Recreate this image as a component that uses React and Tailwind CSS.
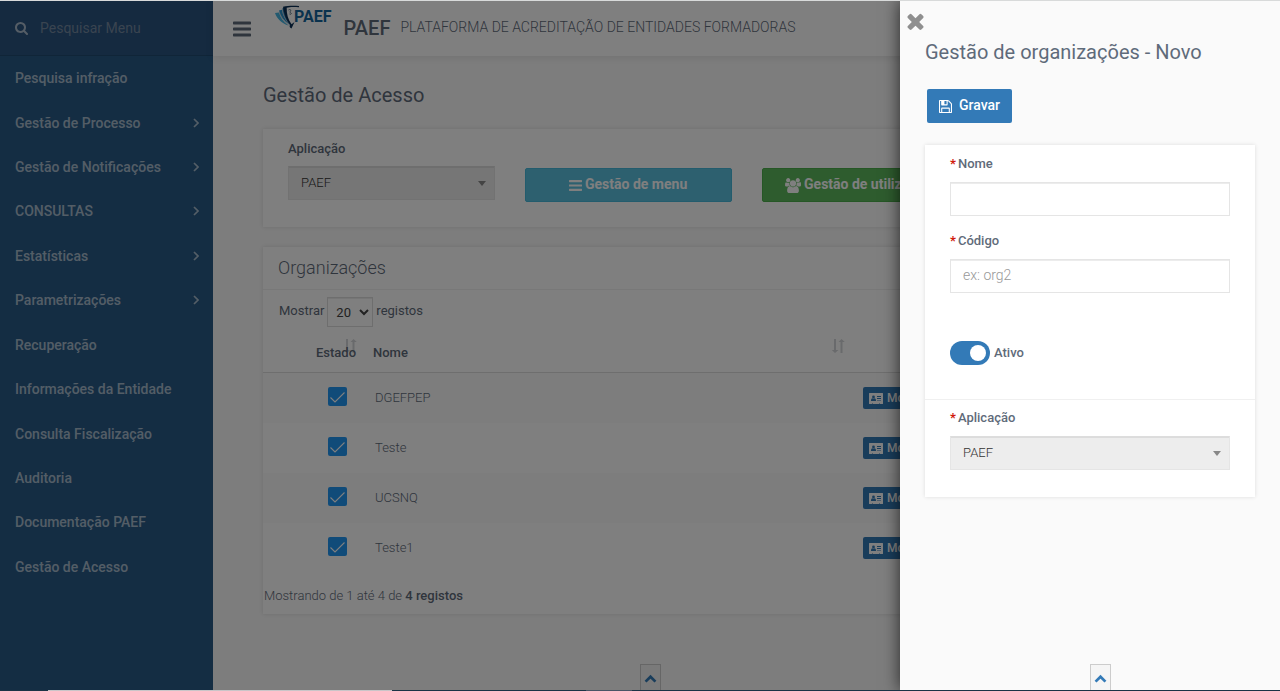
import React from "react";

const PATHS = {
  search: "M1152 832q0-185-131.5-316.5t-316.5-131.5-316.5 131.5-131.5 316.5 131.5 316.5 316.5 131.5 316.5-131.5 131.5-316.5zm512 832q0 52-38 90t-90 38q-54 0-90-38l-343-342q-179 124-399 124-143 0-273.5-55.5t-225-150-150-225-55.5-273.5 55.5-273.5 150-225 225-150 273.5-55.5 273.5 55.5 225 150 150 225 55.5 273.5q0 220-124 399l343 343q37 37 37 90z",
  save: "M512 1536h768v-384h-768v384zm896 0h128v-896q0-14-10-38.5t-20-34.5l-281-281q-10-10-34-20t-39-10v416q0 40-28 68t-68 28h-576q-40 0-68-28t-28-68v-416h-128v1280h128v-416q0-40 28-68t68-28h832q40 0 68 28t28 68v416zm-384-928v-320q0-13-9.5-22.5t-22.5-9.5h-192q-13 0-22.5 9.5t-9.500 22.5v320q0 13 9.5 22.5t22.5 9.5h192q13 0 22.5-9.5t9.5-22.5zm640 32v928q0 40-28 68t-68 28h-1344q-40 0-68-28t-28-68v-1344q0-40 28-68t68-28h928q40 0 88 20t76 48l280 280q28 28 48 76t20 88z",
  times: "M1490 1322q0 40-28 68l-136 136q-28 28-68 28t-68-28l-294-294-294 294q-28 28-68 28t-68-28l-136-136q-28-28-28-68t28-68l294-294-294-294q-28-28-28-68t28-68l136-136q28-28 68-28t68 28l294 294 294-294q28-28 68-28t68 28l136 136q28 28 28 68t-28 68l-294 294 294 294q28 28 28 68z",
  bars: "M1664 1344v128q0 26-19 45t-45 19h-1408q-26 0-45-19t-19-45v-128q0-26 19-45t45-19h1408q26 0 45 19t19 45zm0-512v128q0 26-19 45t-45 19h-1408q-26 0-45-19t-19-45v-128q0-26 19-45t45-19h1408q26 0 45 19t19 45zm0-512v128q0 26-19 45t-45 19h-1408q-26 0-45-19t-19-45v-128q0-26 19-45t45-19h1408q26 0 45 19t19 45z",
  users: "M593 896q-162 5-265 128h-134q-82 0-138-40.5t-56-118.5q0-353 124-353 6 0 43.5 21t97.5 42.5 119 21.5q67 0 133-23-5 37-5 66 0 159 93 294zm1071 637q0 120-73 189.5t-194 69.5h-874q-121 0-194-69.5t-73-189.5q0-53 3.5-103.5t14-109 26.5-108.5 43-97.5 62-81 85.5-53.5 111.5-20q10 0 43 21.5t73 48 107 48 135 21.5 135-21.5 107-48 73-48 43-21.5q61 0 111.5 20t85.5 53.5 62 81 43 97.5 26.5 108.5 14 109 3.5 103.5zm-1024-1277q0 106-75 181t-181 75-181-75-75-181 75-181 181-75 181 75 75 181zm704 384q0 159-112.5 271.5t-271.5 112.5-271.5-112.5-112.5-271.5 112.5-271.5 271.5-112.5 271.5 112.5 112.5 271.5zm576 225q0 78-56 118.5t-138 40.5h-134q-103-123-265-128 93-135 93-294 0-29-5-66 66 23 133 23 59 0 119-21.5t97.5-42.5 43.5-21q124 0 124 353zm-128-609q0 106-75 181t-181 75-181-75-75-181 75-181 181-75 181 75 75 181z",
};

function Icon({ name, viewBox, className }) {
  return (
    <svg viewBox={viewBox} className={className} fill="currentColor" aria-hidden="true">
      <path d={PATHS[name]} />
    </svg>
  );
}

function CardIcon() {
  return (
    <svg viewBox="0 0 14 11" className="h-[11px] w-[14px] shrink-0" aria-hidden="true">
      <path fill="currentColor" d="M.5 0h13a.5.5 0 0 1 .5.5v10a.5.5 0 0 1-.5.5H11v-.6h-1V11H4v-.6H3V11H.5a.5.5 0 0 1-.5-.5V.5A.5.5 0 0 1 .5 0z" />
      <g fill="#337ab7">
        <circle cx="4.500" cy="4" r="1.400" />
        <path d="M2 7.900c0-1.600.5-2.700 1.300-2.700.8.6 1.600.6 2.400 0C6.500 5.200 7 6.300 7 7.900z" />
        <path d="M8 3h4v1H8zM8 5h4v1H8zM8 7h4v.5H8z" />
      </g>
    </svg>
  );
}

function SortIcon() {
  return (
    <svg viewBox="0 0 13 14" className="h-[14px] w-[13px] text-[#d3d5d8]" fill="currentColor" aria-hidden="true">
      <path d="M2 0h2v11h2.500L3 14-.3 11H2zM8.500 14h2V3h2.300L9.500 0 6.500 3h2z" />
    </svg>
  );
}

function Logo() {
  return (
    <div className="flex items-start pt-1">
      <svg viewBox="0 0 25 24" className="-mr-[6px] h-6 w-[25px]" aria-hidden="true">
        <path fill="#46b4e0" d="M0 8l4-.5C5 12 8 16.500 13.500 20.500 7 18.500 2 14 0 8z" />
        <path fill="#2a93cc" d="M4 5.500l3-.7c.5 5 3 10 7.500 15C9 16 5.500 11.500 4 5.500z" />
        <path fill="#1670ae" d="M7.500 3.200L10 2.500C9.500 8 11 13.500 15 19.500 10.500 15.500 8 9.500 7.500 3.200z" />
        <path fill="none" stroke="#9fb0bd" strokeWidth=".6" d="M4.500 7c1 4.500 4 9 9 13M7.400 4.500c.6 5 3 10 7.300 15" />
        <path fill="#0b2f55" d="M8 1.800C13 .6 19 .8 24 1v1.300c-5-.6-9.500-.5-12.300.5-.2 6 1.300 11.500 4.800 16.500L19.500 17 16.500 23.500 15 22.500c-.5-1-.5-2 0-2.500C11 15 9 8.500 8 1.800z" />
        <path fill="none" stroke="#587082" strokeWidth="1" d="M13.500 5c1.500-1 2.800-.2 2 1s-.5 1.500.5 2-.5 2-1.500 1" />
      </svg>
      <span className="pt-[2px] text-base leading-5 font-bold text-[#14659c]">PAEF</span>
    </div>
  );
}

function Caret() {
  return (
    <svg viewBox="0 0 8 5" className="pointer-events-none col-start-1 row-start-1 mr-[9px] h-[5px] w-2 self-center justify-self-end" aria-hidden="true">
      <path d="M0 0h8L4 5z" fill="#888" />
    </svg>
  );
}

function AppSelect({ id }) {
  return (
    <div className="grid">
      <select id={id} className="col-start-1 row-start-1 h-[34px] w-full appearance-none border border-[#e5e5e5] border-t-[#ddd] bg-[#ededed] px-3 text-[13px] font-light text-[#333] shadow-[inset_0_1px_0_#dcdcdc]">
        <option>PAEF</option>
      </select>
      <Caret />
    </div>
  );
}

function Chevron({ className }) {
  return (
    <svg viewBox="0 0 14 10" className={className} fill="none" stroke="currentColor" strokeWidth="3" aria-hidden="true">
      <path d="M1.500 8.500L7 3l5.500 5.500" />
    </svg>
  );
}

const MENU = [
  ["Pesquisa infração", false],
  ["Gestão de Processo", true],
  ["Gestão de Notificações", true],
  ["CONSULTAS", true],
  ["Estatísticas", true],
  ["Parametrizações", true],
  ["Recuperação", false],
  ["Informações da Entidade", false],
  ["Consulta Fiscalização", false],
  ["Auditoria", false],
  ["Documentação PAEF", false],
  ["Gestão de Acesso", false],
];

function Sidebar() {
  return (
    <aside className="w-[213px] shrink-0 bg-[#285a86] text-[#fff]/60">
      <div className="flex h-[55px] items-center border-b border-[#204a70] bg-[#2a5480] pl-[15px]">
        <Icon name="search" viewBox="0 128 1664 1664" className="h-[13px] w-[13px]" />
        <input type="search" aria-label="Pesquisar Menu" placeholder="Pesquisar Menu" className="ml-3 w-40 bg-transparent text-sm outline-none placeholder:text-[#7489a0]" />
      </div>
      <nav>
        <ul className="grid h-[533px] auto-rows-fr">
          {MENU.map(([label, sub]) => (
            <li key={label} className="flex">
              <a href="#" className="flex flex-1 items-center justify-between pr-[14px] pl-[15px] text-sm font-medium">
                {label}
                {sub && (
                  <svg viewBox="0 0 6 10" className="h-[10px] w-[6px]" fill="none" stroke="currentColor" strokeWidth="1.700" aria-hidden="true">
                    <path d="M1 1l4 4-4 4" />
                  </svg>
                )}
              </a>
            </li>
          ))}
        </ul>
      </nav>
    </aside>
  );
}

const CARD = "bg-white shadow-[0_0_4px_rgba(0,0,0,0.12)]";

function Filters() {
  return (
    <section className={`${CARD} mt-5 grid grid-cols-4 gap-x-[30px] px-[25px] pt-[10px] pb-[25px]`}>
      <div>
        <label htmlFor="app-main" className="mb-[7px] block text-[13px] leading-5 font-medium">Aplicação</label>
        <AppSelect id="app-main" />
      </div>
      <button type="button" className="mt-[29px] flex h-[34px] items-center justify-center gap-[3px] rounded-xs border border-[#46b8da] bg-[#5bc0de] text-sm font-bold whitespace-nowrap text-white">
        <Icon name="bars" viewBox="128 128 1536 1536" className="h-[13px] w-[13px]" />
        <span className="pb-[2px]">Gestão de menu</span>
      </button>
      <button type="button" className="mt-[29px] flex h-[34px] items-center justify-center gap-[3px] rounded-xs border border-[#4cae4c] bg-[#5cb85c] text-sm font-bold whitespace-nowrap text-white">
        <Icon name="users" viewBox="0 0 1920 1792" className="h-[15px] w-4" />
        <span className="pb-[2px]">Gestão de utilizadores</span>
      </button>
    </section>
  );
}

function Organizations() {
  return (
    <section className={`${CARD} mt-5`}>
      <h2 className="border-b border-[#f0f0f0] px-[15px] text-lg leading-[42px] font-light">Organizações</h2>
      <div className="flex items-center gap-[3px] pt-[7px] pl-4 text-[13px] font-normal">
        <label htmlFor="page-size" className="pb-[3px]">Mostrar</label>
        <select id="page-size" className="h-[30px] w-[46px] border border-[#ddd] bg-white px-1 text-[13px] text-[#444] shadow-[inset_0_1px_0_#ececec]">
          <option>20</option>
        </select>
        <span className="pb-[3px]">registos</span>
      </div>
      <table className="w-full table-fixed border-separate border-spacing-0 text-left text-[13px] leading-5">
        <thead>
          <tr className="h-[46px] align-top">
            <th className="w-[102px] border-b border-[#ddd] pt-4 pl-[53px] font-medium">
              <div className="relative">
                <span className="absolute -top-1 left-7"><SortIcon /></span>
                <span className="relative">Estado</span>
              </div>
            </th>
            <th className="w-[490px] border-b border-[#ddd] pt-4 pr-[10px] pl-2 font-medium">
              <div className="relative">
                Nome
                <span className="absolute -top-1 right-0"><SortIcon /></span>
              </div>
            </th>
            <th className="border-b border-[#ddd]" />
          </tr>
        </thead>
        <tbody>
          {["DGEFPEP", "Teste", "UCSNQ", "Teste1"].map((name) => (
            <tr key={name} className="h-[50px] align-top odd:bg-[#fbfbfb]">
              <td className="pt-[14px] pl-[65px]">
                <span className="grid h-[19px] w-[19px]">
                  <input type="checkbox" defaultChecked aria-label={`Estado ${name}`} className="col-start-1 row-start-1 h-[19px] w-[19px] appearance-none rounded-xs bg-[#2196f3]" />
                  <svg viewBox="0 0 19 19" className="pointer-events-none col-start-1 row-start-1" fill="none" stroke="#fff" strokeWidth="1.100" aria-hidden="true">
                    <path d="M2.500 10.500L7 15 16.500 5.500" />
                  </svg>
                </span>
              </td>
              <td className="pt-[15px] pl-[10px] font-light">{name}</td>
              <td className="pt-[14px] pl-2">
                <button type="button" className="flex h-[22px] items-center gap-1 rounded-xs bg-[#337ab7] px-[6px] text-xs font-medium text-white">
                  <CardIcon />
                  Mostrar
                </button>
              </td>
            </tr>
          ))}
        </tbody>
      </table>
      <p className="pt-[13px] pb-2 pl-px text-[13px] leading-5 font-light">
        Mostrando de 1 até 4 de <b className="font-medium">4 registos</b>
      </p>
    </section>
  );
}

function ToTop() {
  return (
    <button type="button" aria-label="Voltar ao topo" className="absolute bottom-0 left-1/2 flex h-[26px] w-[21px] items-end justify-center border border-b-0 border-[#ccc] bg-[#f5f5f5] pb-[7px] text-[#337ab7]">
      <Chevron className="h-[9px] w-[13px]" />
    </button>
  );
}

function Req({ htmlFor, children }) {
  return (
    <label htmlFor={htmlFor} className="mb-2 block text-[13px] leading-5 font-medium">
      <span className="mr-[2px] font-bold text-[#d11a0c]">*</span>{children}
    </label>
  );
}

const FIELD = "h-[34px] w-full border border-[#e5e5e5] bg-white px-3 pb-[3px] text-sm font-light shadow-[inset_0_1px_0_#ececec] outline-none placeholder:text-[#999]";

function Drawer() {
  return (
    <aside className="absolute inset-y-0 right-0 w-[380px] bg-[#fafafa] px-[25px] shadow-[0_0_16px_rgba(0,0,0,0.7)]">
      <button type="button" aria-label="Fechar" className="absolute top-3 left-[7px] text-[#8f8f8f]">
        <Icon name="times" viewBox="302 302 1188 1252" className="h-[17px] w-[17px]" />
      </button>
      <h2 className="pt-[37px] text-xl leading-7">Gestão de organizações - Novo</h2>
      <button type="button" className="mt-[23px] ml-[2px] flex h-[34px] items-center gap-[7px] rounded-xs bg-[#337ab7] px-3 text-sm font-medium text-white">
        <Icon name="save" viewBox="128 128 1536 1536" className="h-[13px] w-[13px]" />
        <span className="pb-[2px]">Gravar</span>
      </button>
      <form className={`${CARD} mt-[22px] pb-[27px]`}>
        <div className="px-[25px] pt-[9px]">
          <Req htmlFor="nome">Nome</Req>
          <input id="nome" className={FIELD} />
        </div>
        <div className="px-[25px] pt-[15px]">
          <Req htmlFor="codigo">Código</Req>
          <input id="codigo" placeholder="ex: org2" className={FIELD} />
        </div>
        <label className="flex items-center gap-1 px-[25px] pt-12 pb-[34px] text-[13px] font-medium">
          <input type="checkbox" role="switch" defaultChecked className="h-6 w-10 appearance-none rounded-full bg-[#337ab7] before:mt-1 before:ml-5 before:block before:h-4 before:w-4 before:rounded-full before:bg-white before:content-['']" />
          Ativo
        </label>
        <div className="border-t border-[#f0f0f0] px-[25px] pt-2">
          <Req htmlFor="app-org">Aplicação</Req>
          <AppSelect id="app-org" />
        </div>
      </form>
      <ToTop />
    </aside>
  );
}

export default function App() {
  return (
    <div className="flex min-h-screen flex-col border-t border-[#d8dada] font-[Roboto,sans-serif] text-[#5f6b7a]">
      <div className="relative flex flex-1 overflow-hidden">
        <Sidebar />
        <div className="flex-1 bg-[#fafafa]">
          <header className="flex h-[55px] bg-white pl-5 shadow-[0_1px_8px_rgba(0,0,0,0.1)]">
            <button type="button" aria-label="Menu" className="mr-6">
              <Icon name="bars" viewBox="128 128 1536 1536" className="h-[18px] w-[18px]" />
            </button>
            <Logo />
            <div className="ml-3 flex items-start gap-[10px] pt-[13px] whitespace-nowrap">
              <span className="text-xl leading-7 font-medium">PAEF</span>
              <span className="text-sm leading-[26px] font-light">PLATAFORMA DE ACREDITAÇÃO DE ENTIDADES FORMADORAS</span>
            </div>
          </header>
          <main className="px-[50px] pt-[25px]">
            <h1 className="text-xl leading-7">Gestão de Acesso</h1>
            <Filters />
            <Organizations />
          </main>
        </div>
        <ToTop />
        <div className="absolute inset-0 bg-black/50" />
        <Drawer />
      </div>
      <div className="flex h-px bg-[#1c3446]" aria-hidden="true">
        <div className="ml-12 w-[344px] bg-[#c9c5c8]" />
        <div className="ml-[194px] w-[46px] bg-[#4a5566]" />
      </div>
    </div>
  );
}
